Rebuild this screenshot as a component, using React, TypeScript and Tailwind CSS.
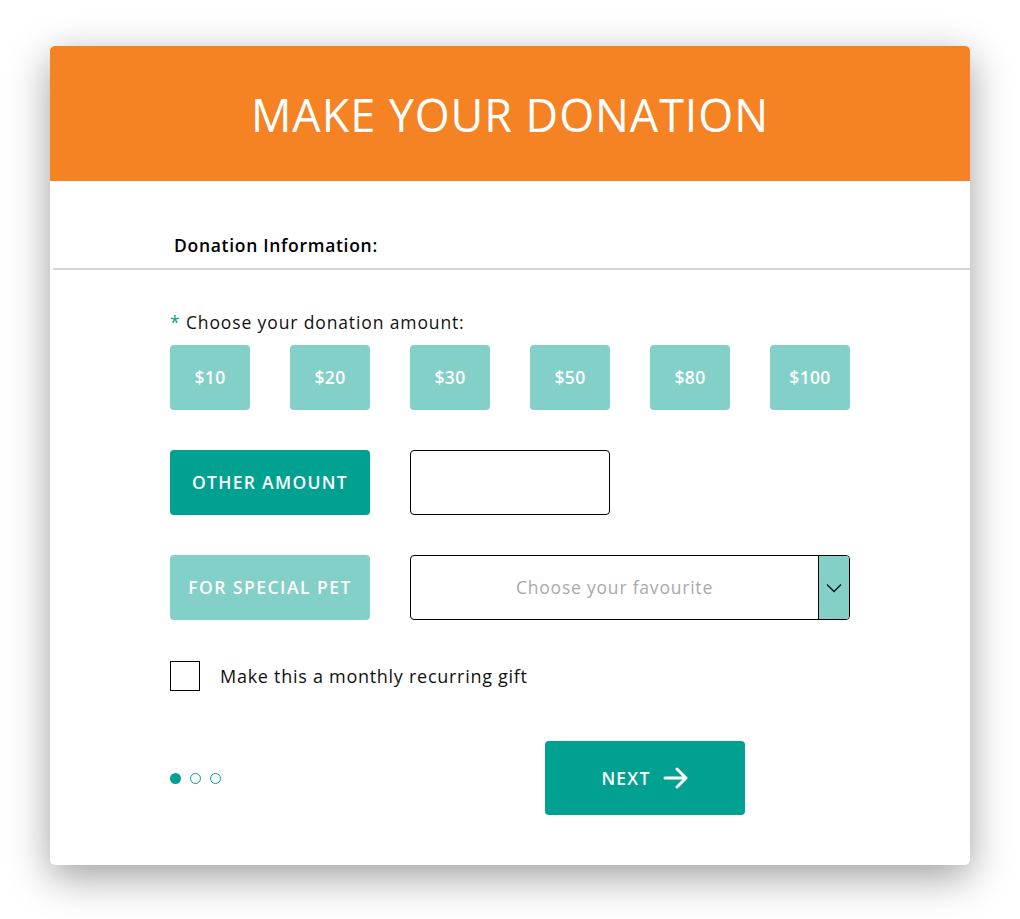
import React from "react";

const amounts = ["$10", "$20", "$30", "$50", "$80", "$100"];

export default function App() {
  return (
    <div className="min-h-[919px] w-[1020px] bg-white pl-[50px] pt-[46px]" style={{ fontFamily: '"Open Sans", "Liberation Sans", sans-serif' }}>
      <div className="flex h-[819px] w-[920px] flex-col rounded-[5px] bg-white shadow-[0_12px_40px_rgba(0,0,0,0.38)]">
        <div className="flex h-[135px] items-center justify-center rounded-t-[5px] bg-[#f58223]">
          <h1 className="mt-[3px] text-[45px] font-normal leading-[60px] tracking-[0.02em] text-white">MAKE YOUR DONATION</h1>
        </div>
        <div className="pl-[124px] pt-[53px] pb-[12px]">
          <div className="text-[17.5px] font-semibold leading-[22px] tracking-[0.04em] text-black">Donation Information:</div>
        </div>
        <div className="ml-[3px] h-[2px] bg-[#d4d4da]" />
        <div className="flex flex-col pl-[120px] pt-[41px]">
          <div className="text-[17.5px] leading-[22px] tracking-[0.05em] text-[#111]">
            <span className="text-[#00a190]">*</span> Choose your donation amount:
          </div>
          <div className="mt-[12px] flex gap-[40px]">
            {amounts.map((a) => (
              <div key={a} className="flex h-[65px] w-[80px] items-center justify-center rounded-[4px] bg-[#82d0c7] text-[17.5px] font-semibold tracking-[0.02em] text-white">
                {a}
              </div>
            ))}
          </div>
          <div className="mt-[40px] flex gap-[40px]">
            <div className="flex h-[65px] w-[200px] items-center justify-center rounded-[4px] bg-[#00a190] text-[17.5px] font-semibold tracking-[0.075em] text-white">
              OTHER AMOUNT
            </div>
            <div className="h-[65px] w-[200px] rounded-[4px] border border-black" />
          </div>
          <div className="mt-[40px] flex gap-[40px]">
            <div className="flex h-[65px] w-[200px] items-center justify-center rounded-[4px] bg-[#82d0c7] text-[17.5px] font-semibold tracking-[0.085em] text-white">
              FOR SPECIAL PET
            </div>
            <div className="flex h-[65px] w-[440px] overflow-hidden rounded-[4px] border border-black">
              <div className="flex flex-1 items-center justify-center text-[17.5px] tracking-[0.045em] text-[#a9a9ad]">Choose your favourite</div>
              <div className="flex w-[31px] items-center justify-center border-l border-black bg-[#82d0c7]">
                <svg width="16" height="10" viewBox="0 0 16 10" fill="none">
                  <path d="M1 1.5 L8 8.5 L15 1.5" stroke="#111" strokeWidth="1.3" />
                </svg>
              </div>
            </div>
          </div>
          <div className="mt-[41px] flex items-center gap-[20px]">
            <div className="h-[30px] w-[30px] border border-black" />
            <div className="text-[18px] leading-[26px] tracking-[0.04em] text-[#111]">Make this a monthly recurring gift</div>
          </div>
          <div className="mt-[50px] flex items-center">
            <div className="flex w-[375px] items-center gap-[9px]">
              <span className="h-[11px] w-[11px] rounded-full bg-[#00a190]" />
              <span className="h-[11px] w-[11px] rounded-full border border-[#00a190]" />
              <span className="h-[11px] w-[11px] rounded-full border border-[#00a190]" />
            </div>
            <div className="flex h-[74px] w-[200px] items-center justify-center gap-[12px] rounded-[4px] bg-[#00a190] text-[17.5px] font-semibold tracking-[0.07em] text-white">
              <span>NEXT</span>
              <svg width="26" height="22" viewBox="0 0 26 22" fill="none">
                <path d="M2 11 H23 M14 2 L23 11 L14 20" stroke="white" strokeWidth="3" strokeLinecap="round" strokeLinejoin="round" />
              </svg>
            </div>
          </div>
        </div>
      </div>
    </div>
  );
}
